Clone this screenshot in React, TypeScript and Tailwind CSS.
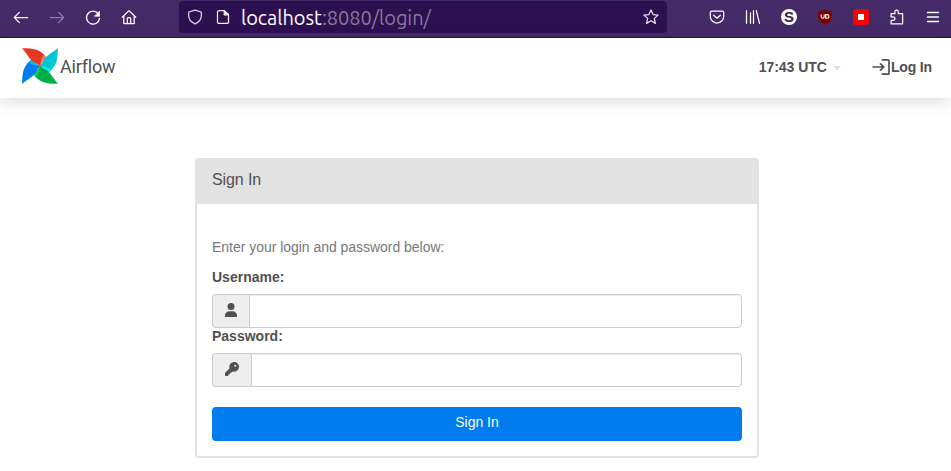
import React from "react";

type IconProps = { children: React.ReactNode; className?: string };

function Icon({ children, className = "" }: IconProps) {
  return (
    <svg
      width="16"
      height="16"
      viewBox="0 0 16 16"
      fill="none"
      stroke="currentColor"
      strokeWidth="1.25"
      strokeLinecap="round"
      strokeLinejoin="round"
      className={`shrink-0 ${className}`}
    >
      {children}
    </svg>
  );
}

function BrowserBar() {
  return (
    <div className="flex h-[38px] items-start border-b border-[#2d1050] bg-[#452a68] pt-px text-[#fbfbfe]">
      <div className="flex h-8 w-[179px] shrink-0 items-center gap-5 pl-[13px]">
        <Icon><path d="M14.7 8.500H1.300M6.400 3.400 1.300 8.500l5.100 5.100" /></Icon>
        <Icon className="text-[#8f7da6]"><path d="M1.300 8.500h13.400M9.600 3.400 14.700 8.500l-5.100 5.100" /></Icon>
        <Icon>
          <path d="M13.1 4.500A6.500 6.500 0 1 0 14.500 9.500" strokeWidth="1.4" />
          <path d="M14.5 2.500v4.700H9.800Z" fill="currentColor" strokeWidth=".8" />
        </Icon>
        <Icon>
          <path d="M1.200 8.200 8 1.600l6.800 6.600M2.800 7v7.600h3.500V9.600c0-.6.4-1 1-1h1.400c.6 0 1 .4 1 1v5h3.500V7M6.300 14.600h3.400" />
        </Icon>
      </div>
      <div className="flex h-8 w-[488px] shrink-0 items-center rounded bg-[#2d1050] pr-2 pl-2">
        <Icon className="text-[#dcd8e3]">
          <path d="M8 1.100 14.300 3v3.800c0 3.700-2.300 6.400-6.300 8.100-4-1.700-6.300-4.400-6.300-8.100V3Z" />
        </Icon>
        <Icon className="ml-3 text-[#f0edf5]">
          <path d="M9.200 1.600H4a1.500 1.500 0 0 0-1.500 1.500v9.800A1.500 1.500 0 0 0 4 14.400h8a1.500 1.500 0 0 0 1.500-1.500V5.800Z" />
          <path d="M9.200 1.600v4.200h4.300Z" fill="currentColor" />
        </Icon>
        <div className="mt-0.5 ml-[10px] w-[192px] font-['Ubuntu','Noto_Sans',sans-serif] text-[20px] leading-8 tracking-[-0.05px] whitespace-nowrap text-[#897799]">
          <span className="text-[#fbfbfe]">localhost</span>:8080/login/
        </div>
        <Icon className="ml-auto text-[#e7e2ee]">
          <path d="m8 1 2.100 4.600 5 .5-3.800 3.300 1.100 5L8 11.800l-4.400 2.600 1.100-5L.9 6.100l5-.5Z" />
        </Icon>
      </div>
      <div className="flex h-8 flex-1 items-center gap-5 pl-[42px]">
        <Icon>
          <path d="M2.700 2.200h10.600c.8 0 1.400.6 1.400 1.400v3.700a6.700 6.700 0 0 1-13.400 0V3.600c0-.8.6-1.400 1.400-1.400Z" />
          <path d="m4.700 6.200 3.300 3 3.300-3" />
        </Icon>
        <Icon><path d="M1.500 1.700v12.600M5.500 3.800v10.500M8.500 1.700v12.600M11.300 1.700l3.200 12.600" /></Icon>
        <div className="flex size-4 items-center justify-center rounded-full bg-white font-['Liberation_Sans',sans-serif] text-[15px] leading-4 font-bold text-[#35204e]">S</div>
        <div className="relative flex size-4 items-center justify-center">
          <svg className="absolute inset-0" width="16" height="16" viewBox="0 0 16 16">
            <path d="M8 .5C10 1.800 12 2.300 14.800 2.500v5.200c0 4-2.700 6-6.800 8-4.100-2-6.800-4-6.800-8V2.500C4 2.300 6 1.800 8 .5Z" fill="#800000" />
            <path d="M4.200 5.500v2.200c0 2 3 2 3 0V5.500M8.700 5.600v3.600h1.200c2.700 0 2.700-3.600 0-3.600Z" fill="none" stroke="#fff" strokeWidth="1.1" />
          </svg>
        </div>
        <div className="flex size-4 items-center justify-center rounded-[3px] bg-[#fb0000]">
          <div className="size-1.5 bg-white" />
        </div>
        <Icon>
          <path d="M2.100 14.900V11.300h2.200a1.700 1.700 0 0 0 0-3.400H2.100V4.700h3.800V2.800a1.700 1.700 0 0 1 3.400 0v1.900h4.300v10.200Z" />
        </Icon>
        <Icon><path d="M2.500 3.500h11M2.500 8h11M2.500 12.500h11" strokeWidth="1.400" /></Icon>
      </div>
    </div>
  );
}

function Pinwheel() {
  const blades = [
    { angle: 0, main: "#e43921", light: "#ff7557" },
    { angle: 90, main: "#00c7d4", light: "#11e1ee" },
    { angle: 180, main: "#00ad46", light: "#04d659" },
    { angle: 270, main: "#017cee", light: "#0cb6ff" },
  ];
  return (
    <svg width="36" height="36" viewBox="0 0 36 36" className="shrink-0">
      {blades.map(({ angle, light }) => (
        <path
          key={angle}
          transform={`rotate(${angle} 18 18)`}
          d="M18 18 17 5 20.500 5.500C22.500 6.800 24.200 8.500 25 10.300 22.200 12 20 14.700 18 18Z"
          fill={light}
        />
      ))}
      {blades.map(({ angle, main }) => (
        <path
          key={angle}
          transform={`rotate(${angle} 18 18)`}
          d="M0 .2C6 .2 11 .5 14.500 1.800c3.300 1.300 5.700 3.200 7.700 5.300C20 8.500 19.300 10.500 19 12.500c-.2 2-.5 3.800-1 5.500-2.500-2-4.500-3.200-7.200-4.500C7 10.800 5 5.500 0 .2Z"
          fill={main}
        />
      ))}
      <circle cx="18" cy="18" r=".7" fill="#51504f" />
    </svg>
  );
}

function Navbar() {
  return (
    <header className="flex h-[60px] items-center justify-between bg-white pr-[19px] pb-1 pl-[22px] shadow-[0_3px_16px_rgba(0,0,0,0.15)]">
      <div className="flex h-9 items-center">
        <Pinwheel />
        <span className="mt-0.5 ml-[2px] font-['Roboto',sans-serif] text-[18px] leading-9 tracking-[-0.2px]">Airflow</span>
      </div>
      <div className="flex items-center pt-0.5 text-sm font-bold">
        <span className="tracking-[-0.03px]">17:43 UTC</span>
        <span className="mt-0.5 ml-[6px] border-x-4 border-t-4 border-x-transparent border-t-[#e4d8e9]" />
        <svg className="ml-[31px]" width="19" height="18" viewBox="0 0 19 18" fill="none" stroke="currentColor" strokeWidth="1.700">
          <path d="M.5 9h11M8 5.300 11.700 9 8 12.700M9.700 1.800H16a1 1 0 0 1 1 1v12.400a1 1 0 0 1-1 1H9.700" />
        </svg>
        <span className="tracking-[-0.15px]">Log In</span>
      </div>
    </header>
  );
}

function UserGlyph() {
  return (
    <svg width="12" height="14" viewBox="0 0 12 14" fill="currentColor">
      <circle cx="6" cy="3.500" r="3.500" />
      <path d="M0 14v-1.200C0 9.800 2 8.300 4.800 8.300h2.400c2.800 0 4.800 1.500 4.800 4.500V14Z" />
    </svg>
  );
}

function KeyGlyph() {
  return (
    <svg width="14" height="14" viewBox="0 0 512 512" fill="currentColor">
      <path d="M336 352c97.200 0 176-78.800 176-176S433.200 0 336 0S160 78.800 160 176c0 18.700 2.900 36.800 8.300 53.700L7 391c-4.500 4.500-7 10.600-7 17v80c0 13.300 10.700 24 24 24h80c13.300 0 24-10.700 24-24v-40h40c13.300 0 24-10.700 24-24v-40h40c6.400 0 12.500-2.500 17-7l33.300-33.300c16.900 5.400 35 8.300 53.700 8.300zM376 96a40 40 0 1 1 0 80 40 40 0 1 1 0-80z" />
    </svg>
  );
}

type FieldProps = { label: string; type: string; glyph: React.ReactNode };

function Field({ label, type, glyph }: FieldProps) {
  return (
    <label className="block">
      <span className="block h-[25px] leading-4 font-bold">{label}</span>
      <span className="flex h-[34px]">
        <span className="flex shrink-0 items-center rounded-l border border-r-0 border-[#ccc] bg-[#eee] px-3 pb-0.5">{glyph}</span>
        <input type={type} className="min-w-0 flex-1 rounded-r border border-[#ccc] bg-white px-3 shadow-[inset_0_1px_1px_rgba(0,0,0,0.075)] outline-none" />
      </span>
    </label>
  );
}

export default function App() {
  return (
    <div className="flex h-[471px] w-[951px] flex-col overflow-hidden bg-white font-['Liberation_Sans',Arial,sans-serif] text-sm text-[#51504f]">
      <BrowserBar />
      <Navbar />
      <main className="mt-[60px] ml-[195px] h-[300px] w-[564px] rounded border-2 border-[#e2e2e2] bg-white">
        <h1 className="h-11 bg-[#e2e2e2] pt-[9px] pl-[15px] text-base leading-[22px] tracking-[-0.1px]">Sign In</h1>
        <form className="px-[15px] pt-[33px]">
          <p className="mb-3 leading-5 tracking-[-0.03px] text-[#777]">Enter your login and password below:</p>
          <Field label="Username:" type="text" glyph={<UserGlyph />} />
          <Field label="Password:" type="password" glyph={<KeyGlyph />} />
          <button type="button" className="mt-5 block h-[34px] w-full rounded bg-[#017cee] pb-1 text-center leading-5 text-white">Sign In</button>
        </form>
      </main>
    </div>
  );
}
